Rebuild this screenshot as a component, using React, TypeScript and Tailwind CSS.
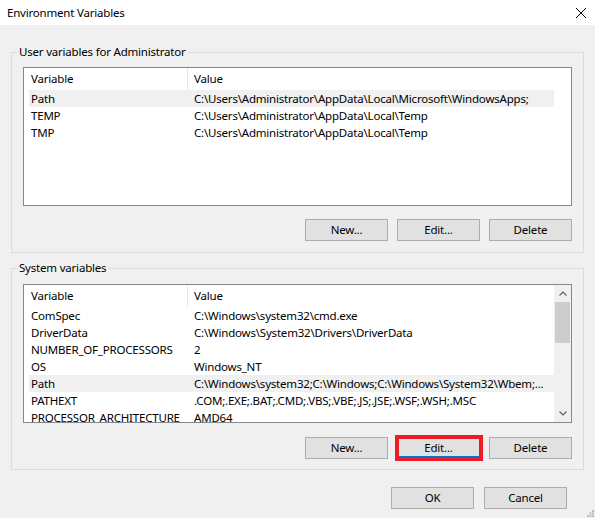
import type { ReactNode } from 'react';

type Row = { name: string; value: string; selected?: boolean };

const USER_VARS: Row[] = [
  { name: 'Path', value: 'C:\\Users\\Administrator\\AppData\\Local\\Microsoft\\WindowsApps;', selected: true },
  { name: 'TEMP', value: 'C:\\Users\\Administrator\\AppData\\Local\\Temp' },
  { name: 'TMP', value: 'C:\\Users\\Administrator\\AppData\\Local\\Temp' },
];

const SYSTEM_VARS: Row[] = [
  { name: 'ComSpec', value: 'C:\\Windows\\system32\\cmd.exe' },
  { name: 'DriverData', value: 'C:\\Windows\\System32\\Drivers\\DriverData' },
  { name: 'NUMBER_OF_PROCESSORS', value: '2' },
  { name: 'OS', value: 'Windows_NT' },
  {
    name: 'Path',
    value: 'C:\\Windows\\system32;C:\\Windows;C:\\Windows\\System32\\Wbem;...',
    selected: true,
  },
  { name: 'PATHEXT', value: '.COM;.EXE;.BAT;.CMD;.VBS;.VBE;.JS;.JSE;.WSF;.WSH;.MSC' },
  { name: 'PROCESSOR_ARCHITECTURE', value: 'AMD64' },
];

function WinButton({ children, className = '' }: { children: ReactNode; className?: string }) {
  return (
    <button
      className={`h-[22px] w-[83px] shrink-0 border border-[#adadad] bg-[#e1e1e1] leading-none text-black ${className}`}
    >
      {children}
    </button>
  );
}

function Chevron({ up }: { up?: boolean }) {
  return (
    <svg width="8" height="5" viewBox="0 0 8 5" className={up ? '' : 'rotate-180'}>
      <path d="M0.5 4.5 L4 1 L7.5 4.5" fill="none" stroke="#606060" strokeWidth="1.2" />
    </svg>
  );
}

function VarList({ rows, scrollbar }: { rows: Row[]; scrollbar?: boolean }) {
  return (
    <div className="flex h-[139px] min-w-0 overflow-hidden border border-[#828790] bg-white">
      <div className="min-w-0 flex-1 pl-[5px]">
        <div className="flex h-[22px] items-center">
          <div className="w-[158px] shrink-0 pl-[2px]">Variable</div>
          <div className="flex h-full items-center border-l border-[#e5e5e5] pl-[6px]">Value</div>
        </div>
        {rows.map((r) => (
          <div
            key={r.name}
            className={`flex h-[17px] items-center whitespace-nowrap ${r.selected ? 'bg-[#f0f0f0]' : ''}`}
          >
            <div className="w-[158px] shrink-0 pl-[2px]">{r.name}</div>
            <div className="pl-[7px]">{r.value}</div>
          </div>
        ))}
      </div>
      {scrollbar ? (
        <div className="flex w-[17px] shrink-0 flex-col items-center bg-[#f0f0f0]">
          <div className="flex h-[17px] items-center justify-center">
            <Chevron up />
          </div>
          <div className="h-[41px] w-[15px] bg-[#cdcdcd]" />
          <div className="flex-1" />
          <div className="flex h-[17px] items-center justify-center">
            <Chevron />
          </div>
        </div>
      ) : (
        <div className="w-[17px] shrink-0" />
      )}
    </div>
  );
}

export default function App() {
  return (
    <div
      className="relative flex h-[518px] w-[595px] flex-col overflow-hidden bg-[#f0f0f0] text-[11.5px] tracking-[-0.2px] text-black"
      style={{ fontFamily: '"Noto Sans", "Liberation Sans", sans-serif' }}
    >
      {/* title bar */}
      <div className="flex h-[25px] shrink-0 items-center justify-between bg-white pl-[7px] pr-[9px]">
        <span>Environment Variables</span>
        <svg width="10" height="10" viewBox="0 0 10 10">
          <path d="M0 0 L10 10 M10 0 L0 10" stroke="#000" strokeWidth="1" />
        </svg>
      </div>

      <div className="flex flex-col px-[11px]">
        <fieldset className="mt-[19px] min-w-0 border border-[#dcdcdc] px-[11px] pb-[11px]">
          <legend className="-ml-[6px] px-[2px] leading-[16px]">User variables for Administrator</legend>
          <div className="mt-[7px]">
            <VarList rows={USER_VARS} />
          </div>
          <div className="mt-[13px] flex justify-end gap-[9px]">
            <WinButton>New...</WinButton>
            <WinButton>Edit...</WinButton>
            <WinButton>Delete</WinButton>
          </div>
        </fieldset>

        <fieldset className="mt-[7px] min-w-0 border border-[#dcdcdc] px-[11px] pb-[10px]">
          <legend className="-ml-[6px] px-[2px] leading-[16px]">System variables</legend>
          <div className="mt-[8px]">
            <VarList rows={SYSTEM_VARS} scrollbar />
          </div>
          <div className="mt-[14px] flex justify-end gap-[9px]">
            <WinButton>New...</WinButton>
            <div className="relative">
              <WinButton className="shadow-[inset_0_-2px_0_#0078d7]">Edit...</WinButton>
              <div className="pointer-events-none absolute -left-[2px] -top-[2px] h-[26px] w-[88px] border-4 border-[#ed1c24]" />
            </div>
            <WinButton>Delete</WinButton>
          </div>
        </fieldset>

        <div className="mt-[17px] flex justify-end gap-[10px] pr-[17px]">
          <WinButton className="w-[82px]">OK</WinButton>
          <WinButton>Cancel</WinButton>
        </div>
      </div>

      {/* resize grip */}
      <svg className="absolute bottom-[1px] right-[1px]" width="7" height="7" viewBox="0 0 7 7">
        <rect x="5" y="0" width="2" height="2" fill="#bcbcbc" />
        <rect x="2.5" y="2.5" width="2" height="2" fill="#bcbcbc" />
        <rect x="5" y="2.5" width="2" height="2" fill="#bcbcbc" />
        <rect x="0" y="5" width="2" height="2" fill="#bcbcbc" />
        <rect x="2.5" y="5" width="2" height="2" fill="#bcbcbc" />
        <rect x="5" y="5" width="2" height="2" fill="#bcbcbc" />
      </svg>
    </div>
  );
}
